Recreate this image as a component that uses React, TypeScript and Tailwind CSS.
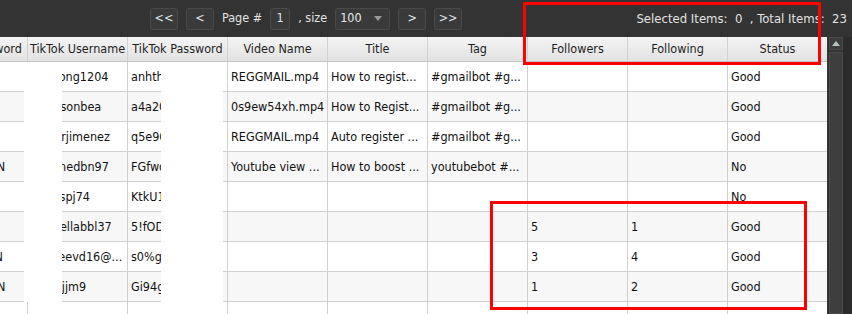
const columns = [
  "Gmail Password",
  "TikTok Username",
  "TikTok Password",
  "Video Name",
  "Title",
  "Tag",
  "Followers",
  "Following",
  "Status",
];

// grid is scrolled sideways, so the first column only shows its tail
const rows: string[][] = [
  ["mk2021ab", "kimhong1204", "anhthu@123", "REGGMAIL.mp4", "How to regist...", "#gmailbot #g...", "", "", "Good"],
  ["pw88xyz", "emersonbea", "a4a20fX!", "0s9ew54xh.mp4", "How to Regist...", "#gmailbot #g...", "", "", "Good"],
  ["qq1199", "xavierjimenez", "q5e90kz", "REGGMAIL.mp4", "Auto register ...", "#gmailbot #g...", "", "", "Good"],
  ["Hoang202VN", "daminedbn97", "FGfwq1", "Youtube view ...", "How to boost ...", "youtubebot #...", "", "", "No"],
  ["zz55aa", "hungspj74", "KtkU1x9", "", "", "", "", "", "No"],
  ["tt7711", "gabriellabbl37", "5!fODm", "", "", "", "5", "1", "Good"],
  ["Minh1998VN", "chaneevd16@...", "s0%gh2", "", "", "", "3", "4", "Good"],
  ["Tuan.1234VN", "samujjm9", "Gi94gT", "", "", "", "1", "2", "Good"],
  ["", "", "", "", "", "", "", "", ""],
];

function BarButton({ children, w = "w-[28px]" }: { children: React.ReactNode; w?: string }) {
  return (
    <div
      className={`${w} h-[22px] flex items-center justify-center rounded-[3px] border border-[#4a4a4a] bg-[#3a3a3a] text-[#dfe6ee]`}
    >
      {children}
    </div>
  );
}

export default function App() {
  return (
    <div className="relative w-[852px] h-[314px] overflow-hidden bg-white font-['DejaVu_Sans_Condensed','DejaVu_Sans',sans-serif] text-[12.5px]">
      {/* top pager bar */}
      <div className="flex h-[37px] items-center bg-[#333333] pl-[150px] pr-[5px] text-[#e2e2e2]">
        <div className="flex items-center gap-2">
          <BarButton>&lt;&lt;</BarButton>
          <BarButton>&lt;</BarButton>
          <span>Page #</span>
          <BarButton w="w-[20px]">1</BarButton>
          <span>, size</span>
          <div className="flex h-[22px] w-[55px] items-center justify-between rounded-[3px] border border-[#4a4a4a] bg-[#3a3a3a] pl-[4px] pr-[7px] text-[#e8e8e8]">
            <span>100</span>
            <svg width="8" height="5" viewBox="0 0 8 5">
              <path d="M0 0h8L4 5z" fill="#9a9a9a" />
            </svg>
          </div>
          <BarButton>&gt;</BarButton>
          <BarButton>&gt;&gt;</BarButton>
        </div>
        <div className="ml-auto whitespace-nowrap text-[13px]">Selected Items:&nbsp; 0&nbsp; , Total Items:&nbsp; 23</div>
      </div>

      <div className="flex">
        {/* grid */}
        <div className="w-[827px] h-[277px] overflow-hidden">
          <div className="-ml-[72px] w-[900px]">
            <div className="flex h-[25px] border-b border-[#c4c4c4] bg-gradient-to-b from-[#f4f4f4] to-[#e2e2e2] text-[#1e1e1e]">
              {columns.map((c) => (
                <div
                  key={c}
                  className="w-[100px] shrink-0 overflow-hidden whitespace-nowrap border-r border-[#d2d2d2] pt-[4px] text-center leading-[16px]"
                >
                  {c}
                </div>
              ))}
            </div>
            {rows.map((r, i) => (
              <div
                key={i}
                className={`flex h-[30px] border-b border-[#d0d0d0] text-[#111] ${i % 2 === 1 ? "bg-[#f7f7f7]" : "bg-white"}`}
              >
                {r.map((v, j) => (
                  <div
                    key={j}
                    className="w-[100px] shrink-0 overflow-hidden whitespace-nowrap border-r border-[#d0d0d0] pl-[3px] leading-[29px]"
                  >
                    {v}
                  </div>
                ))}
              </div>
            ))}
          </div>
        </div>

        {/* vertical scrollbar */}
        <div className="flex h-[277px] w-[25px] bg-[#333333] pl-[2px]">
          <div className="flex w-[14px] flex-col gap-[2px]">
            <div className="flex h-[13px] items-center justify-center border border-[#4a4a4a] bg-[#3c3c3c]">
              <svg width="8" height="5" viewBox="0 0 8 5">
                <path d="M0 5h8L4 0z" fill="#b8c4bc" />
              </svg>
            </div>
            <div className="flex-1 border border-[#4a4a4a] bg-[#3e3e3e]" />
          </div>
          <div className="flex-1 bg-[#2c2c2c]" />
        </div>
      </div>

      {/* redaction masks */}
      <div className="absolute left-[24px] top-[62px] h-[240px] w-[38px] bg-white" />
      <div className="absolute left-[161px] top-[62px] h-[240px] w-[62px] bg-white" />

      {/* annotation boxes */}
      <div className="absolute left-[523px] top-[2px] h-[63px] w-[298px] border-[3px] border-[#ff0000]" />
      <div className="absolute left-[490px] top-[201px] h-[109px] w-[317px] border-[3px] border-[#ff0000]" />
    </div>
  );
}
